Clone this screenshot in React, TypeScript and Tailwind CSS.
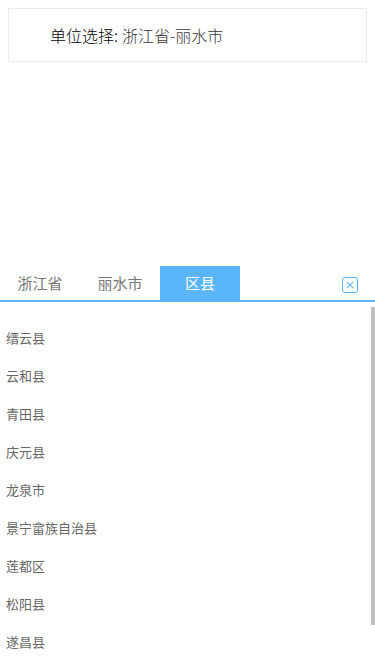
import React, { useState } from "react";

const counties = [
  "缙云县",
  "云和县",
  "青田县",
  "庆元县",
  "龙泉市",
  "景宁畲族自治县",
  "莲都区",
  "松阳县",
  "遂昌县",
];

const tabs = ["浙江省", "丽水市", "区县"];

const App = () => {
  const [active, setActive] = useState(2);

  return (
    <div
      className="relative h-[667px] w-[375px] overflow-hidden bg-white"
      style={{ fontFamily: '"Noto Sans CJK SC", "Noto Sans", sans-serif' }}
    >
      <div className="px-2 pt-2">
        <div className="flex h-[54px] items-center border border-[#ececec] pl-[41px] text-[16px] font-light text-black">
          <span>单位选择:</span>
          <span className="ml-1 text-[#333]">浙江省-丽水市</span>
        </div>
      </div>

      <div className="mt-[204px]">
        <div className="flex items-end border-b-2 border-[#5ab5f9]">
          {tabs.map((t, idx) => (
            <button
              key={t}
              onClick={() => setActive(idx)}
              className={`flex h-[34px] w-20 items-center justify-center text-[15px] ${
                active === idx ? "bg-[#5ab5f9] text-white" : "text-[#777]"
              }`}
            >
              {t}
            </button>
          ))}
          <div className="ml-auto mb-[7px] mr-[17px] flex h-4 w-4 items-center justify-center rounded-[3px] border border-[#5ab5f9]">
            <svg viewBox="0 0 10 10" className="h-2 w-2" fill="none" stroke="#5ab5f9" strokeWidth={1.4}>
              <path d="M1 1 9 9M9 1 1 9" />
            </svg>
          </div>
        </div>

        <ul className="pt-[17px]">
          {counties.map((c) => (
            <li key={c} className="flex h-[38px] items-center pl-[6px] text-[13px] text-[#666]">
              {c}
            </li>
          ))}
        </ul>
      </div>

      <div className="absolute right-0 top-[307px] h-[318px] w-1 bg-[#c1c1c1]" />
    </div>
  );
};

export default App;
